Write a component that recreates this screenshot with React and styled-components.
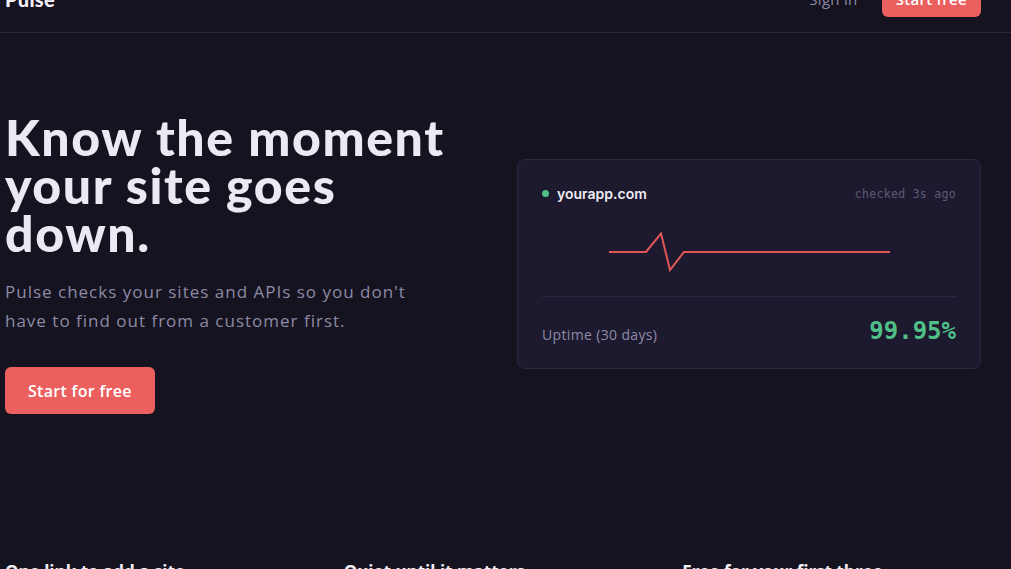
import React from "react";
import styled, { createGlobalStyle } from "styled-components";

const GlobalStyle = createGlobalStyle`
  * { box-sizing: border-box; }
  html, body {
    margin: 0;
    padding: 0;
    background: #15131f;
    overflow: hidden;
  }
  body {
    font-family: "Open Sans", "Liberation Sans", sans-serif;
    color: #ece9f3;
  }
`;

const features = [
  { title: "One link to add a site", text: "Paste a URL and Pulse starts checking it right away." },
  { title: "Quiet until it matters", text: "Alerts only when something is actually down." },
  { title: "Free for your first three", text: "No card needed to get your first monitors running." },
];

const App = () => {
  return (
    <>
      <GlobalStyle />
      <Page>
        <Nav>
          <Brand>Pulse</Brand>
          <NavLinks>
            <SignIn>Sign in</SignIn>
            <Button $small>Start free</Button>
          </NavLinks>
        </Nav>

        <Hero>
          <HeroText>
            <Title>
              Know the moment
              <br />
              your site goes
              <br />
              down.
            </Title>
            <Lead>
              Pulse checks your sites and APIs so you don't have to find out
              from a customer first.
            </Lead>
            <Button>Start for free</Button>
          </HeroText>

          <Card>
            <CardRow>
              <Site>
                <Dot />
                yourapp.com
              </Site>
              <Checked>checked 3s ago</Checked>
            </CardRow>
            <Chart width="281" height="40" viewBox="0 0 281 40">
              <polyline
                points="0,20 37,20 52,1.5 61,38 75,20 281,20"
                fill="none"
                stroke="#e25656"
                strokeWidth="2"
                strokeLinejoin="miter"
              />
            </Chart>
            <Divider />
            <CardRow>
              <UptimeLabel>Uptime (30 days)</UptimeLabel>
              <UptimeValue>99.95%</UptimeValue>
            </CardRow>
          </Card>
        </Hero>

        <Features>
          {features.map((f) => (
            <Feature key={f.title}>
              <FeatureTitle>{f.title}</FeatureTitle>
              <FeatureText>{f.text}</FeatureText>
            </Feature>
          ))}
        </Features>
      </Page>
    </>
  );
};

const Page = styled.div`
  width: 976px;
  margin-left: 5px;
  margin-top: -35px;
`;

const Nav = styled.header`
  display: flex;
  justify-content: space-between;
  align-items: center;
  height: 68px;
  border-bottom: 1px solid #29253d;
  margin: 0 -5px;
  padding: 16px 30px 16px 5px;
  width: 1011px;
`;

const Brand = styled.div`
  font-family: "Lato", sans-serif;
  font-weight: 900;
  font-size: 20px;
  letter-spacing: 0.3px;
  color: #f1eff7;
`;

const NavLinks = styled.div`
  display: flex;
  align-items: center;
  gap: 24px;
`;

const SignIn = styled.a`
  font-size: 15px;
  letter-spacing: 0.3px;
  color: #8d8aa5;
  cursor: pointer;
`;

const Button = styled.button`
  border: none;
  background: #eb5f5f;
  color: #fff;
  font-family: "Open Sans", sans-serif;
  font-weight: 600;
  font-size: ${(p) => (p.$small ? "15px" : "16px")};
  letter-spacing: 0.3px;
  height: ${(p) => (p.$small ? "36px" : "47px")};
  padding: ${(p) => (p.$small ? "0 14px" : "0 23px")};
  border-radius: 6px;
  cursor: pointer;
  align-self: flex-start;
`;

const Hero = styled.section`
  display: grid;
  grid-template-columns: 1fr 1fr;
  gap: 48px;
  align-items: center;
  padding: 80px 0;
`;

const HeroText = styled.div`
  display: flex;
  flex-direction: column;
`;

const Title = styled.h1`
  margin: 0;
  font-family: "Lato", sans-serif;
  font-weight: 900;
  font-size: 50px;
  line-height: 48px;
  letter-spacing: 1.6px;
  color: #ece9f3;
`;

const Lead = styled.p`
  margin: 20px 0 32px;
  font-size: 17px;
  line-height: 29px;
  letter-spacing: 1px;
  color: #8d8aa5;
  max-width: 420px;
`;

const Card = styled.div`
  background: #1d1a2f;
  border: 1px solid #2c2842;
  border-radius: 8px;
  padding: 24px 24px 23px;
  display: flex;
  flex-direction: column;
  align-items: stretch;
`;

const CardRow = styled.div`
  display: flex;
  justify-content: space-between;
  align-items: center;
  min-height: 20px;
`;

const Site = styled.div`
  display: flex;
  align-items: center;
  gap: 8px;
  font-family: "Inter", sans-serif;
  font-weight: 600;
  font-size: 14px;
  color: #eeecf5;
`;

const Dot = styled.span`
  width: 7px;
  height: 7px;
  border-radius: 50%;
  background: #4fbf87;
`;

const Checked = styled.span`
  font-family: "DejaVu Sans Mono", monospace;
  font-size: 11.5px;
  letter-spacing: 0.3px;
  color: #5d5a74;
`;

const Chart = styled.svg`
  display: block;
  align-self: center;
  margin: 28px 0 24px;
`;

const Divider = styled.div`
  height: 1px;
  background: #2c2842;
  margin-bottom: 20px;
`;

const UptimeLabel = styled.span`
  font-size: 14px;
  letter-spacing: 0.35px;
  color: #8d8aa5;
  margin-top: 8px;
`;

const UptimeValue = styled.span`
  font-family: "DejaVu Sans Mono", monospace;
  font-weight: 700;
  font-size: 24px;
  line-height: 28px;
  color: #4fbf87;
`;

const Features = styled.section`
  display: grid;
  grid-template-columns: repeat(3, 1fr);
  gap: 40px;
  padding-top: 66px;
`;

const Feature = styled.div`
  display: flex;
  flex-direction: column;
  gap: 8px;
`;

const FeatureTitle = styled.h3`
  margin: 0;
  font-family: "Open Sans", sans-serif;
  font-weight: 700;
  font-size: 17px;
  line-height: 24px;
  color: #f1eff7;
`;

const FeatureText = styled.p`
  margin: 0;
  font-size: 15px;
  line-height: 24px;
  color: #8d8aa5;
`;

export default App;
